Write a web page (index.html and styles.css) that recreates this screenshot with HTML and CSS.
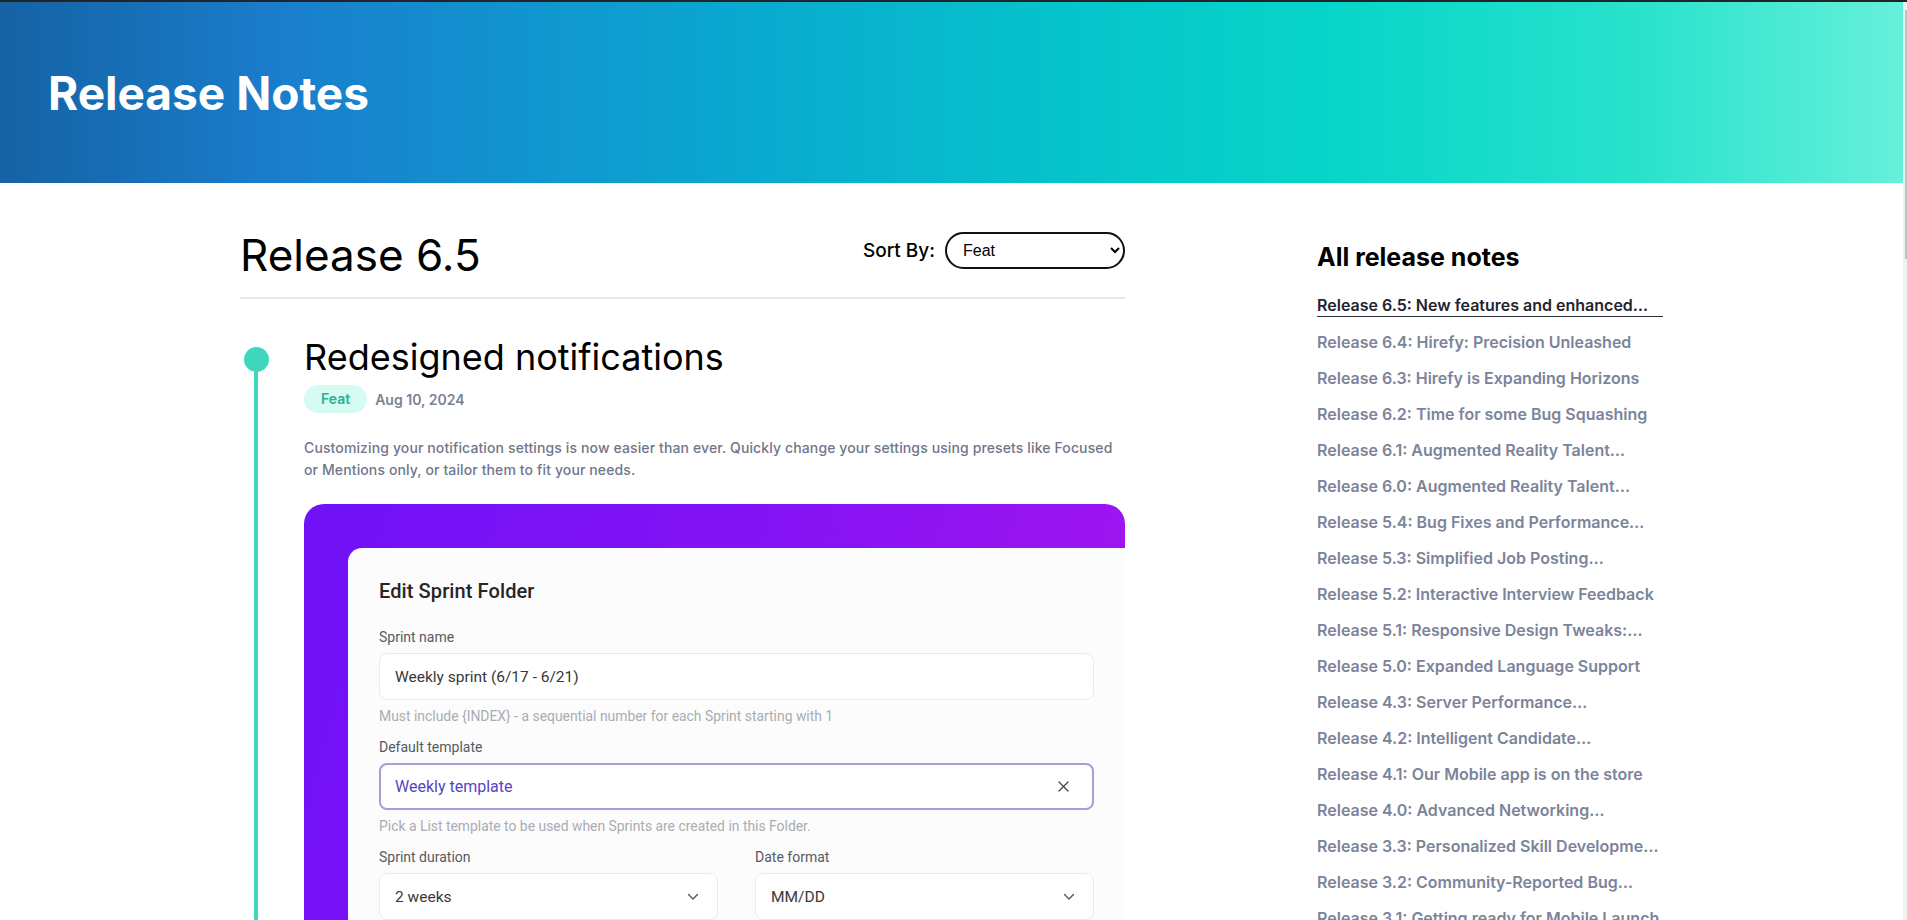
FILE: index.html
```html
<!DOCTYPE html>
<html lang="en">
<head>
<meta charset="utf-8">
<title>Release Notes</title>
<link rel="stylesheet" href="styles.css">
</head>
<body>
<div class="site">
  <header class="hero">
    <h1 class="hero-title">Release Notes</h1>
  </header>
  <div class="page">
    <main class="main">
      <div class="release-head">
        <h2 class="release-title">Release 6.5</h2>
        <label class="sort">
          <span>Sort By:</span>
          <select class="sort-select">
            <option>Feat</option>
            <option>Fix</option>
            <option>Improvement</option>
          </select>
        </label>
      </div>
      <article class="entry">
        <div class="rail"><span class="dot"></span><span class="rail-line"></span></div>
        <div class="entry-body">
          <h3 class="entry-title">Redesigned notifications</h3>
          <div class="meta"><span class="badge">Feat</span><span class="date">Aug 10, 2024</span></div>
          <p class="entry-text">Customizing your notification settings is now easier than ever. Quickly change your settings using presets like Focused or Mentions only, or tailor them to fit your needs.</p>
          <div class="shot">
            <div class="panel">
              <div class="panel-title">Edit Sprint Folder</div>
              <div class="field-label">Sprint name</div>
              <div class="field">Weekly sprint (6/17 - 6/21)</div>
              <div class="field-hint">Must include {INDEX} - a sequential number for each Sprint starting with 1</div>
              <div class="field-label">Default template</div>
              <div class="field field-focus">
                <span>Weekly template</span>
                <svg class="icon-x" width="11" height="11" viewBox="0 0 11 11"><path d="M1 1 L10 10 M10 1 L1 10" stroke="#4a4a4a" stroke-width="1.4" fill="none" stroke-linecap="round"/></svg>
              </div>
              <div class="field-hint">Pick a List template to be used when Sprints are created in this Folder.</div>
              <div class="field-row">
                <div class="field-col">
                  <div class="field-label">Sprint duration</div>
                  <div class="field field-select">
                    <span>2 weeks</span>
                    <svg width="12" height="8" viewBox="0 0 12 8"><path d="M1.5 1.5 L6 6 L10.5 1.5" stroke="#555" stroke-width="1.4" fill="none" stroke-linecap="round" stroke-linejoin="round"/></svg>
                  </div>
                </div>
                <div class="field-col">
                  <div class="field-label">Date format</div>
                  <div class="field field-select">
                    <span>MM/DD</span>
                    <svg width="12" height="8" viewBox="0 0 12 8"><path d="M1.5 1.5 L6 6 L10.5 1.5" stroke="#555" stroke-width="1.4" fill="none" stroke-linecap="round" stroke-linejoin="round"/></svg>
                  </div>
                </div>
              </div>
              <div class="field-label">Start day</div>
              <div class="field field-select">
                <span>Monday</span>
                <svg width="12" height="8" viewBox="0 0 12 8"><path d="M1.5 1.5 L6 6 L10.5 1.5" stroke="#555" stroke-width="1.4" fill="none" stroke-linecap="round" stroke-linejoin="round"/></svg>
              </div>
            </div>
          </div>
        </div>
      </article>
    </main>
    <aside class="sidebar">
      <h2 class="sidebar-title">All release notes</h2>
      <ul class="notes">
        <li class="note active">Release 6.5: New features and enhanced…</li>
        <li class="note">Release 6.4: Hirefy: Precision Unleashed</li>
        <li class="note">Release 6.3: Hirefy is Expanding Horizons</li>
        <li class="note">Release 6.2: Time for some Bug Squashing</li>
        <li class="note">Release 6.1: Augmented Reality Talent…</li>
        <li class="note">Release 6.0: Augmented Reality Talent…</li>
        <li class="note">Release 5.4: Bug Fixes and Performance…</li>
        <li class="note">Release 5.3: Simplified Job Posting…</li>
        <li class="note">Release 5.2: Interactive Interview Feedback</li>
        <li class="note">Release 5.1: Responsive Design Tweaks:…</li>
        <li class="note">Release 5.0: Expanded Language Support</li>
        <li class="note">Release 4.3: Server Performance…</li>
        <li class="note">Release 4.2: Intelligent Candidate…</li>
        <li class="note">Release 4.1: Our Mobile app is on the store</li>
        <li class="note">Release 4.0: Advanced Networking…</li>
        <li class="note">Release 3.3: Personalized Skill Developme…</li>
        <li class="note">Release 3.2: Community-Reported Bug…</li>
        <li class="note">Release 3.1: Getting ready for Mobile Launch</li>
        <li class="note">Release 3.0: Smarter Search and Filters</li>
        <li class="note">Release 2.2: Dashboard Improvements</li>
      </ul>
    </aside>
  </div>
</div>
</body>
</html>
```
FILE: styles.css
```css
* {
  box-sizing: border-box;
}

html,
body {
  margin: 0;
  padding: 0;
}

body {
  font-family: Inter, "Noto Sans", sans-serif;
  color: #000;
  background: #f1f1f1;
  border-top: 2px solid #212428;
  padding-right: 4px;
}

/* scrollbar thumb drawn over the 4px track on the right */
body::after {
  content: "";
  position: fixed;
  top: 10px;
  right: 0;
  width: 2px;
  height: 249px;
  background: #c1c1c1;
}

.site {
  background: #fff;
}

/* Header */
.hero {
  height: 181px;
  background: linear-gradient(90deg, #1562a4 0%, #1a7ecd 15%, #0aa7d0 38%, #06c2cb 55%, #07d5c8 70%, #28e2cc 86%, #66f0da 100%);
  display: flex;
  align-items: center;
  padding-left: 48px;
}

.hero-title {
  margin: 0;
  font-size: 46px;
  font-weight: 700;
  line-height: 54px;
  color: #fff;
}

/* Page layout */
.page {
  width: 1423px;
  margin: 0 auto;
  padding-top: 46px;
  padding-bottom: 80px;
  display: flex;
  align-items: flex-start;
  gap: 192px;
}

.main {
  width: 885px;
  flex: none;
}

.release-head {
  display: flex;
  justify-content: space-between;
  align-items: flex-start;
  padding-bottom: 15px;
  border-bottom: 2px solid #e2e8f0;
}

.release-title {
  margin: 0;
  font-size: 44px;
  font-weight: 400;
  line-height: 53px;
  color: #000;
}

.sort {
  display: flex;
  align-items: center;
  gap: 10px;
  margin-top: 3px;
  font-size: 19px;
  font-weight: 500;
  color: #000;
}

.sort-select {
  width: 180px;
  height: 37px;
  border: 2px solid #111;
  border-radius: 20px;
  padding: 0 4px 0 12px;
  font-family: "Liberation Sans", Arial, sans-serif;
  font-size: 16px;
  color: #000;
  background: #fff;
}

/* Timeline entry */
.entry {
  display: flex;
  margin-top: 38px;
}

.rail {
  width: 64px;
  flex: none;
  display: flex;
  flex-direction: column;
}

.dot {
  width: 25px;
  height: 25px;
  border-radius: 50%;
  background: #3ed6bd;
  margin: 10px 0 0 4px;
}

.rail-line {
  width: 4px;
  flex: 1;
  margin-left: 14px;
  background: #3ed6bd;
}

.entry-body {
  flex: 1;
  min-width: 0;
}

.entry-title {
  margin: 0;
  font-size: 36px;
  font-weight: 400;
  line-height: 40px;
  color: #000;
}

.meta {
  display: flex;
  align-items: center;
  gap: 8px;
  margin-top: 8px;
}

.badge {
  height: 28px;
  line-height: 28px;
  padding: 0 17px;
  border-radius: 14px;
  background: #d5fbf2;
  color: #27b292;
  font-size: 14px;
  font-weight: 600;
}

.date {
  font-size: 14px;
  font-weight: 600;
  color: #7b8296;
}

.entry-text {
  margin: 24px 0 23px;
  font-size: 14px;
  font-weight: 500;
  line-height: 22px;
  letter-spacing: 0.12px;
  color: #6f768a;
}

/* Screenshot card */
.shot {
  display: flex;
  overflow: hidden;
  border-radius: 20px;
  padding: 44px 0 0 44px;
  background: linear-gradient(105deg, #7011f7 0%, #8513f4 50%, #a715ed 100%);
}

.panel {
  width: 800px;
  flex: none;
  padding: 31px 54px 40px 31px;
  border-radius: 14px 0 0 0;
  background: #fcfcfc;
  font-family: Roboto, "Liberation Sans", sans-serif;
}

.panel-title {
  font-size: 20px;
  font-weight: 500;
  line-height: 24px;
  letter-spacing: 0.1px;
  color: #262626;
  margin-bottom: 25px;
}

.field-label {
  font-size: 14px;
  line-height: 18px;
  color: #555a61;
  margin-bottom: 7px;
}

.field {
  height: 47px;
  display: flex;
  align-items: center;
  justify-content: space-between;
  padding: 0 18px 0 15px;
  border: 1px solid #ebebeb;
  border-radius: 8px;
  background: #fff;
  font-size: 15.5px;
  color: #383838;
}

.field-focus {
  border: 2px solid #a69ddf;
  padding: 0 23px 0 14px;
  color: #5646bf;
  font-size: 16px;
}

.field-hint {
  font-size: 13.9px;
  line-height: 18px;
  color: #a9adb3;
  margin: 7px 0 13px;
}

.field-row {
  display: flex;
  gap: 37px;
  margin-bottom: 20px;
}

.field-col {
  flex: 1;
}

/* Sidebar */
.sidebar {
  width: 346px;
  flex: none;
  margin-top: 14px;
}

.sidebar-title {
  margin: 0 0 24px;
  font-size: 25px;
  font-weight: 700;
  line-height: 28px;
  color: #000;
}

.notes {
  list-style: none;
  margin: 0;
  padding: 0;
  display: flex;
  flex-direction: column;
  gap: 15px;
}

.note {
  font-size: 16px;
  font-weight: 600;
  line-height: 21px;
  color: #7c849a;
  white-space: nowrap;
}

.note.active {
  color: #1f2430;
  border-bottom: 1px solid #2b2f38;
}
```
